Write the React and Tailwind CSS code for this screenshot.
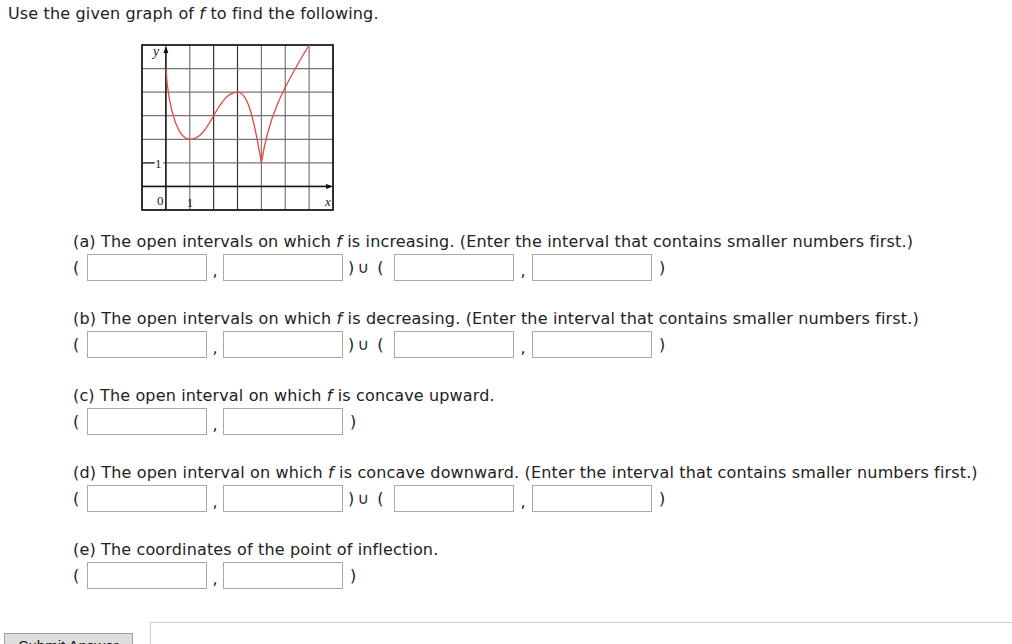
import { useState } from 'react';

const COLS = 8;
const ROWS = 7;
const CW = 191 / COLS;
const RH = 165 / ROWS;

// graph coordinates -> svg pixels (origin at column 1, row 6)
const gx = (x) => 1 + CW * (x + 1);
const gy = (y) => 1 + RH * (6 - y);

const Graph = () => {
  const curve = [
    `M ${gx(0)} ${gy(5)}`,
    `C ${gx(0.12)} ${gy(3.1)}, ${gx(0.55)} ${gy(2)}, ${gx(1)} ${gy(2)}`,
    `C ${gx(1.45)} ${gy(2)}, ${gx(1.72)} ${gy(2.5)}, ${gx(2)} ${gy(3)}`,
    `C ${gx(2.3)} ${gy(3.55)}, ${gx(2.6)} ${gy(4)}, ${gx(3)} ${gy(4)}`,
    `C ${gx(3.4)} ${gy(4)}, ${gx(3.65)} ${gy(3.1)}, ${gx(4)} ${gy(1)}`,
    `C ${gx(4.3)} ${gy(2.9)}, ${gx(4.8)} ${gy(4)}, ${gx(6)} ${gy(6)}`,
  ].join(' ');

  return (
    <svg width="194" height="168" viewBox="0 0 194 168" className="block">
      {Array.from({ length: COLS + 1 }).map((_, i) => (
        <line
          key={'v' + i}
          x1={1 + i * CW}
          y1="1"
          x2={1 + i * CW}
          y2="166"
          stroke={i === 3 || i === 4 ? '#333' : '#777'}
          strokeWidth="1.2"
        />
      ))}
      {Array.from({ length: ROWS + 1 }).map((_, i) => (
        <line
          key={'h' + i}
          x1="1"
          y1={1 + i * RH}
          x2="192"
          y2={1 + i * RH}
          stroke="#777"
          strokeWidth="1.2"
        />
      ))}
      <rect x="1" y="1" width="191" height="165" fill="none" stroke="#111" strokeWidth="1.6" />
      {/* axes */}
      <line x1={gx(0)} y1="166" x2={gx(0)} y2="4" stroke="#111" strokeWidth="1.4" />
      <polygon points={`${gx(0)},2 ${gx(0) - 2.5},9 ${gx(0) + 2.5},9`} fill="#111" />
      <line x1="1" y1={gy(0)} x2="189" y2={gy(0)} stroke="#111" strokeWidth="1.4" />
      <polygon points={`192,${gy(0)} 185,${gy(0) - 2.5} 185,${gy(0) + 2.5}`} fill="#111" />
      {/* labels */}
      <rect x="13" y={gy(1) - 6} width="9" height="12" fill="white" />
      <line x1="1" y1={gy(1)} x2="14" y2={gy(1)} stroke="#333" strokeWidth="1.2" />
      <text x="14" y={gy(1) + 5} fontFamily="'Liberation Serif', serif" fontSize="13" fill="#222">1</text>
      <text x="16" y="161" fontFamily="'Liberation Serif', serif" fontSize="13" fill="#222">0</text>
      <text x={gx(1) - 3} y="163" fontFamily="'Liberation Serif', serif" fontSize="13" fill="#222">1</text>
      <text x="12" y="12" fontFamily="'Liberation Serif', serif" fontStyle="italic" fontSize="14" fill="#222">y</text>
      <text x="184" y="162" fontFamily="'Liberation Serif', serif" fontStyle="italic" fontSize="13" fill="#222">x</text>
      <path d={curve} fill="none" stroke="#e0493e" strokeWidth="1.3" />
    </svg>
  );
};

const Box = () => <input type="text" className="w-[120px] h-[27px] border border-[#a9a9a9] bg-white outline-none px-1" />;

const Pair = ({ wide }) => (
  <>
    <Box />
    <span className={`${wide ? 'w-[18px]' : 'w-[16px]'} shrink-0 text-center relative top-[3px]`}>,</span>
    <Box />
  </>
);

const Question = ({ label, children, union, top }) => (
  <div className={top}>
    <div className="leading-[18px]">
      {label} {children}
    </div>
    <div className="flex items-center mt-[3px] h-[27px]">
      <span className="w-[14px] shrink-0">(</span>
      <Pair />
      {union ? (
        <>
          <span className="w-[51px] shrink-0 flex pl-[5px]">
            <span>)</span>
            <span className="ml-[3px]">∪</span>
            <span className="ml-[8px]">(</span>
          </span>
          <Pair wide />
        </>
      ) : null}
      <span className="ml-[7px]">)</span>
    </div>
  </div>
);

const HINT = ' (Enter the interval that contains smaller numbers first.)';

export default function App() {
  const [hover, setHover] = useState(false);

  return (
    <div className="w-[1012px] h-[644px] overflow-hidden bg-white text-[#222] text-[16px] tracking-[0.15px] font-['Verdana','DejaVu_Sans',sans-serif]">
      <div className="pl-2 pt-[5px] leading-[18px]">
        Use the given graph of <i>f</i> to find the following.
      </div>
      <div className="ml-[141px] mt-[21px]">
        <Graph />
      </div>
      <div className="ml-[73px]">
        <Question top="mt-[21px]" label="(a)" union>
          The open intervals on which <i>f</i> is increasing.{HINT}
        </Question>
        <Question top="mt-[29px]" label="(b)" union>
          The open intervals on which <i>f</i> is decreasing.{HINT}
        </Question>
        <Question top="mt-[29px]" label="(c)">
          The open interval on which <i>f</i> is concave upward.
        </Question>
        <Question top="mt-[29px]" label="(d)" union>
          The open interval on which <i>f</i> is concave downward.{HINT}
        </Question>
        <Question top="mt-[29px]" label="(e)">
          The coordinates of the point of inflection.
        </Question>
      </div>
      <div className="flex items-start mt-[33px]">
        <button
          onMouseEnter={() => setHover(true)}
          onMouseLeave={() => setHover(false)}
          className={`ml-[4px] mt-[11px] w-[129px] pt-[3px] pb-[6px] leading-[18px] border border-[#a0a0a0] text-[15px] tracking-normal text-[#111] font-['Liberation_Sans',Arial,sans-serif] ${hover ? 'bg-[#e5e5e5]' : 'bg-[#dddddd]'}`}
        >
          Submit Answer
        </button>
        <div className="ml-[17px] flex-1 h-[40px] border border-[#cccccc] border-r-0"></div>
      </div>
    </div>
  );
}
